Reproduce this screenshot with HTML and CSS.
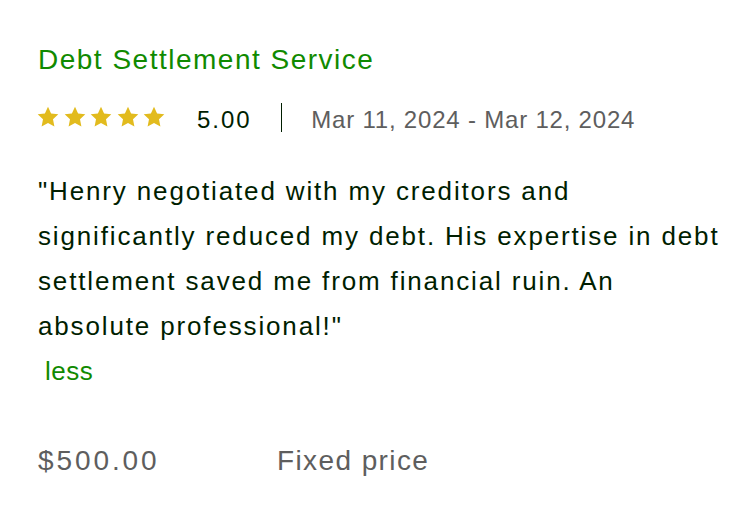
FILE: index.html
```html
<!DOCTYPE html>
<html>
<head>
<meta charset="utf-8">
<link rel="stylesheet" href="styles.css">
</head>
<body>
<div class="card">
  <h2 class="title">Debt Settlement Service</h2>
  <div class="meta">
    <div class="stars">
      <svg viewBox="0 0 24 24"><path d="M12 1.8l3.1 6.6 7.2.9-5.3 5 1.4 7.1L12 17.9l-6.4 3.5 1.4-7.1-5.3-5 7.2-.9z"/></svg>
      <svg viewBox="0 0 24 24"><path d="M12 1.8l3.1 6.6 7.2.9-5.3 5 1.4 7.1L12 17.9l-6.4 3.5 1.4-7.1-5.3-5 7.2-.9z"/></svg>
      <svg viewBox="0 0 24 24"><path d="M12 1.8l3.1 6.6 7.2.9-5.3 5 1.4 7.1L12 17.9l-6.4 3.5 1.4-7.1-5.3-5 7.2-.9z"/></svg>
      <svg viewBox="0 0 24 24"><path d="M12 1.8l3.1 6.6 7.2.9-5.3 5 1.4 7.1L12 17.9l-6.4 3.5 1.4-7.1-5.3-5 7.2-.9z"/></svg>
      <svg viewBox="0 0 24 24"><path d="M12 1.8l3.1 6.6 7.2.9-5.3 5 1.4 7.1L12 17.9l-6.4 3.5 1.4-7.1-5.3-5 7.2-.9z"/></svg>
    </div>
    <span class="score">5.00</span>
    <span class="sep"></span>
    <span class="dates">Mar 11, 2024 - Mar 12, 2024</span>
  </div>
  <p class="review">"Henry negotiated with my creditors and significantly reduced my debt. His expertise in debt settlement saved me from financial ruin. An absolute professional!"</p>
  <div class="more"><a class="less" href="#">less</a></div>
  <div class="price-row">
    <span class="price">$500.00</span>
    <span class="kind">Fixed price</span>
  </div>
</div>
</body>
</html>
```
FILE: styles.css
```css
html, body { margin: 0; padding: 0; background: #fff; }
body { font-family: "Liberation Sans", Arial, sans-serif; }
.card { padding: 42px 0 0 38px; width: 690px; }
.title { margin: 0; font-size: 28px; font-weight: 400; color: #108a00; line-height: 36px; letter-spacing: 1.5px; }
.meta { display: flex; align-items: flex-start; height: 34px; margin-top: 25px; }
.stars { display: flex; gap: 2.5px; margin-top: 2px; margin-left: -2px; }
.stars svg { width: 24px; height: 24px; fill: #e2bb1e; }
.score { margin-left: 31px; font-size: 24px; line-height: 34px; letter-spacing: 2px; color: #001e00; }
.sep { width: 1.5px; height: 29px; background: #001e00; margin: 0 29px 0 29px; }
.dates { font-size: 24px; line-height: 34px; letter-spacing: 0.8px; color: #5e5e5e; }
.review { margin: 32px 0 0; font-size: 26px; line-height: 45px; color: #001e00; letter-spacing: 1.85px; }
.more { margin-top: 0; padding-left: 7px; font-size: 26px; line-height: 44px; letter-spacing: 0.5px; }
.less { color: #108a00; text-decoration: none; }
.price-row { display: flex; margin-top: 48px; font-size: 28px; line-height: 40px; color: #5e5e5e; }
.price { width: 239px; letter-spacing: 2.9px; }
.kind { letter-spacing: 1.4px; }
```
